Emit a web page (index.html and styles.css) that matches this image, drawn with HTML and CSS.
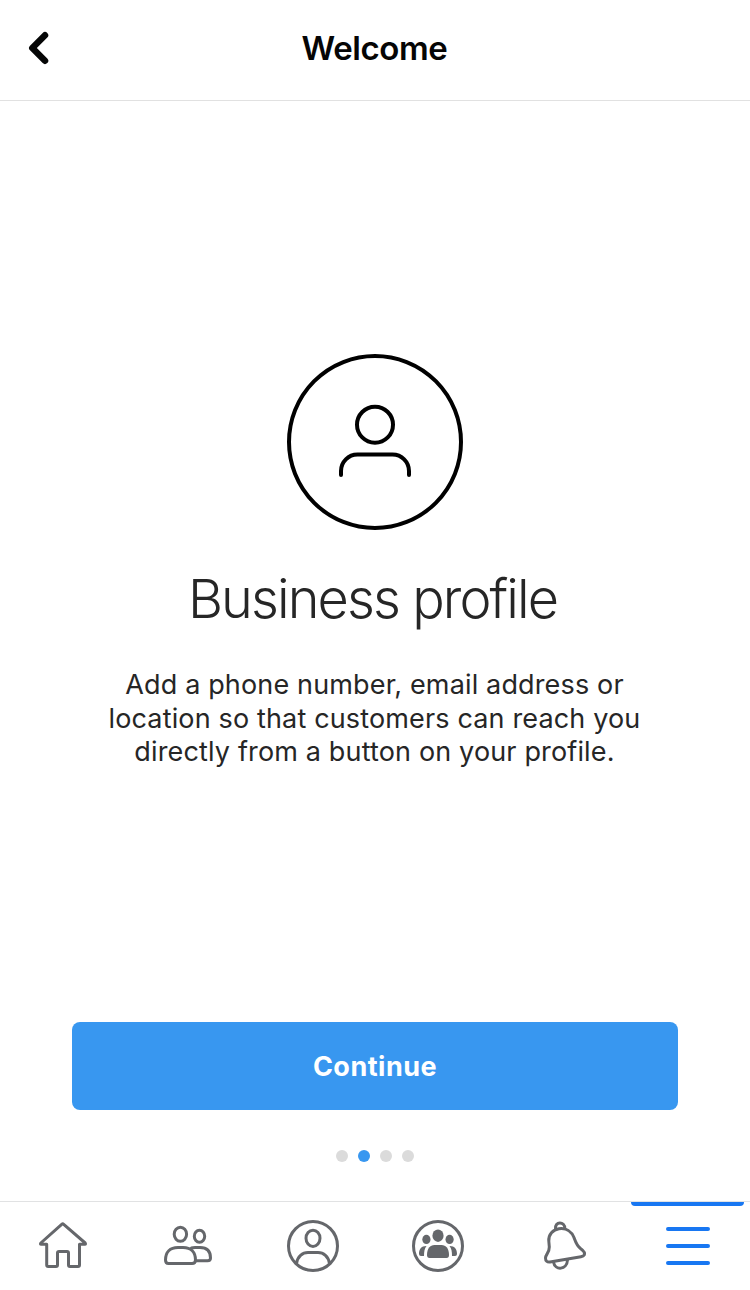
FILE: index.html
```html
<!DOCTYPE html>
<html lang="en">
<head>
    <meta charset="UTF-8">
    <meta name="viewport" content="width=device-width, initial-scale=1.0">
    <title>Welcome</title>
    <link rel="stylesheet" href="styles.css">
</head>
<body>
    <header class="header">
        <a class="back" href="#" aria-label="Back">
            <svg width="28" height="40" viewBox="0 0 28 40"><path d="M21 7.200 L8.300 20 L21 32.800"/></svg>
        </a>
        <h1 class="title">Welcome</h1>
    </header>

    <main class="content">
        <svg class="profile-icon" width="176" height="176" viewBox="0 0 176 176">
            <circle cx="88" cy="88" r="86"/>
            <circle cx="88" cy="70.700" r="18"/>
            <path d="M54 121 V117 A16.500 16.500 0 0 1 70.500 100.500 H105.500 A16.500 16.500 0 0 1 122 117 V121"/>
        </svg>
        <h2 class="heading">Business profile</h2>
        <p class="description">Add a phone number, email address or<br>location so that customers can reach you<br>directly from a button on your profile.</p>
        <button class="continue">Continue</button>
        <div class="dots">
            <span class="dot"></span>
            <span class="dot active"></span>
            <span class="dot"></span>
            <span class="dot"></span>
        </div>
    </main>

    <nav class="tabs">
        <a class="tab" href="#" aria-label="Home">
            <svg viewBox="0 0 125 88"><path d="M61.700 22.300 Q62.700 21.500 63.700 22.300 L85.200 41 Q86 42.300 84.800 42.300 H79.500 V63 Q79.500 64.500 78 64.500 H70 Q68.500 64.500 68.500 63 V51 Q68.500 49.500 67 49.500 H59 Q57.500 49.500 57.500 51 V63 Q57.500 64.500 56 64.500 H48.200 Q46.700 64.500 46.700 63 V42.300 H41.200 Q40 42.300 40.800 41 Z"/></svg>
        </a>
        <a class="tab" href="#" aria-label="Friends">
            <svg viewBox="0 0 125 88">
                <ellipse cx="55.400" cy="32.300" rx="6.200" ry="7"/>
                <ellipse cx="74.500" cy="34.300" rx="5.200" ry="6"/>
                <path d="M43.500 61.500 H67 Q70.500 61.500 70.500 58 C70.500 50 66 45.500 58 45.500 H53 C45 45.500 40.500 50 40.500 58 Q40.500 61.500 43.500 61.500 Z"/>
                <path d="M66.500 46 Q68 45.500 70 45.500 H75 C82 45.500 85.500 49.500 85.500 56 Q85.500 58.700 82.500 58.700 H71"/>
            </svg>
        </a>
        <a class="tab" href="#" aria-label="Profile">
            <svg viewBox="0 0 125 88">
                <circle cx="63" cy="44" r="24.500"/>
                <ellipse cx="63" cy="36.300" rx="7" ry="8.100"/>
                <path d="M46.500 61.500 C47.500 54.500 52.500 50.500 58 50.500 H68 C73.500 50.500 78.500 54.500 79.500 61.500"/>
            </svg>
        </a>
        <a class="tab" href="#" aria-label="Groups">
            <svg viewBox="0 0 125 88">
                <circle cx="63" cy="44" r="24.500"/>
                <g class="solid">
                    <ellipse cx="63" cy="33.700" rx="5.600" ry="6.200"/>
                    <ellipse cx="51.400" cy="37.400" rx="4.100" ry="4.600"/>
                    <ellipse cx="74.600" cy="37.400" rx="4.100" ry="4.600"/>
                    <path d="M54.500 56 H71.500 Q74 56 74 53 C74 46.500 71 43 66.500 43 H59.500 C55 43 52 46.500 52 53 Q52 56 54.500 56 Z"/>
                    <path d="M51.500 44 C46 44 44 47.500 44 52 Q44 54 46 54 H49 C49 49.500 49.500 46.500 51.500 44 Z"/>
                    <path d="M74.500 44 C80 44 82 47.500 82 52 Q82 54 80 54 H77 C77 49.500 76.500 46.500 74.500 44 Z"/>
                </g>
            </svg>
        </a>
        <a class="tab" href="#" aria-label="Notifications">
            <svg viewBox="0 0 125 88">
                <path d="M48.800 39 C48.300 32.500 53 27.500 59 26.700 C66 25.700 71.500 29.500 74 35.500 C75.800 40.500 76.500 43.500 80.500 46.500 C84 49 85.200 51 84.200 53 Q83.500 54.300 81 54.700 L50 60 Q45.500 60.500 45.500 56 C45.500 52.500 49.500 50.500 49.300 45 Z"/>
                <path d="M55.500 27 C54.500 19 65 19 64.800 26.500 M53.500 60 C55 69 67 68 67.500 58"/>
            </svg>
        </a>
        <a class="tab selected" href="#" aria-label="Menu">
            <svg viewBox="0 0 125 88"><path d="M43 27 H83 M43 44 H83 M43 61 H83"/></svg>
        </a>
    </nav>
</body>
</html>
```
FILE: styles.css
```css
* {
    box-sizing: border-box;
}
body {
    margin: 0;
    height: 1290px;
    display: flex;
    flex-direction: column;
    font-family: Inter, 'Liberation Sans', sans-serif;
    background-color: #fff;
    color: #262626;
}
.header {
    height: 101px;
    padding-bottom: 4px;
    display: grid;
    grid-template-columns: 125px 1fr 125px;
    align-items: center;
    border-bottom: 1px solid #e1e1e1;
}
.back {
    display: flex;
    padding-left: 24px;
}
.back path {
    fill: none;
    stroke: #050606;
    stroke-width: 6.5;
    stroke-linecap: round;
    stroke-linejoin: round;
}
.title {
    margin: 0;
    padding-right: 1px;
    text-align: center;
    font-size: 33px;
    line-height: 40px;
    font-weight: 600;
    letter-spacing: -0.4px;
    color: #050505;
}
.content {
    flex: 1;
    display: flex;
    flex-direction: column;
    align-items: center;
    padding-top: 253px;
}
.profile-icon {
    fill: none;
    stroke: #000;
    stroke-width: 4;
    stroke-linecap: round;
}
.heading {
    margin: 33px 0 0;
    padding-right: 5px;
    font-size: 54px;
    line-height: 72px;
    font-weight: 300;
    letter-spacing: -1.9px;
}
.description {
    margin: 33px 0 0;
    padding-right: 1px;
    font-size: 27px;
    line-height: 33.5px;
    letter-spacing: 0.15px;
    text-align: center;
}
.continue {
    width: 606px;
    height: 88px;
    margin-top: auto;
    border: none;
    border-radius: 8px;
    background-color: #3897f0;
    color: #fff;
    font-family: inherit;
    font-size: 27px;
    font-weight: 700;
    letter-spacing: 0.5px;
}
.dots {
    display: flex;
    gap: 10px;
    margin: 40px 0 39px;
}
.dot {
    width: 12px;
    height: 12px;
    border-radius: 50%;
    background-color: #dbdbdb;
}
.dot.active {
    background-color: #3897f0;
}
.tabs {
    display: grid;
    grid-template-columns: repeat(6, 1fr);
    height: 89px;
    border-top: 1px solid #e1e2e3;
}
.tab {
    position: relative;
    color: #65676b;
}
.tab svg {
    display: block;
    width: 125px;
    height: 88px;
    fill: none;
    stroke: currentColor;
    stroke-width: 3;
    stroke-linecap: round;
    stroke-linejoin: round;
}
.tab .solid {
    fill: currentColor;
    stroke: none;
}
.tab.selected {
    color: #1877f2;
}
.tab.selected svg {
    stroke-width: 4;
}
/* marker on top of the current tab */
.tab.selected::before {
    content: '';
    position: absolute;
    top: 0;
    left: 6px;
    width: 113px;
    height: 4px;
    border-radius: 0 0 4px 4px;
    background-color: currentColor;
}
```
